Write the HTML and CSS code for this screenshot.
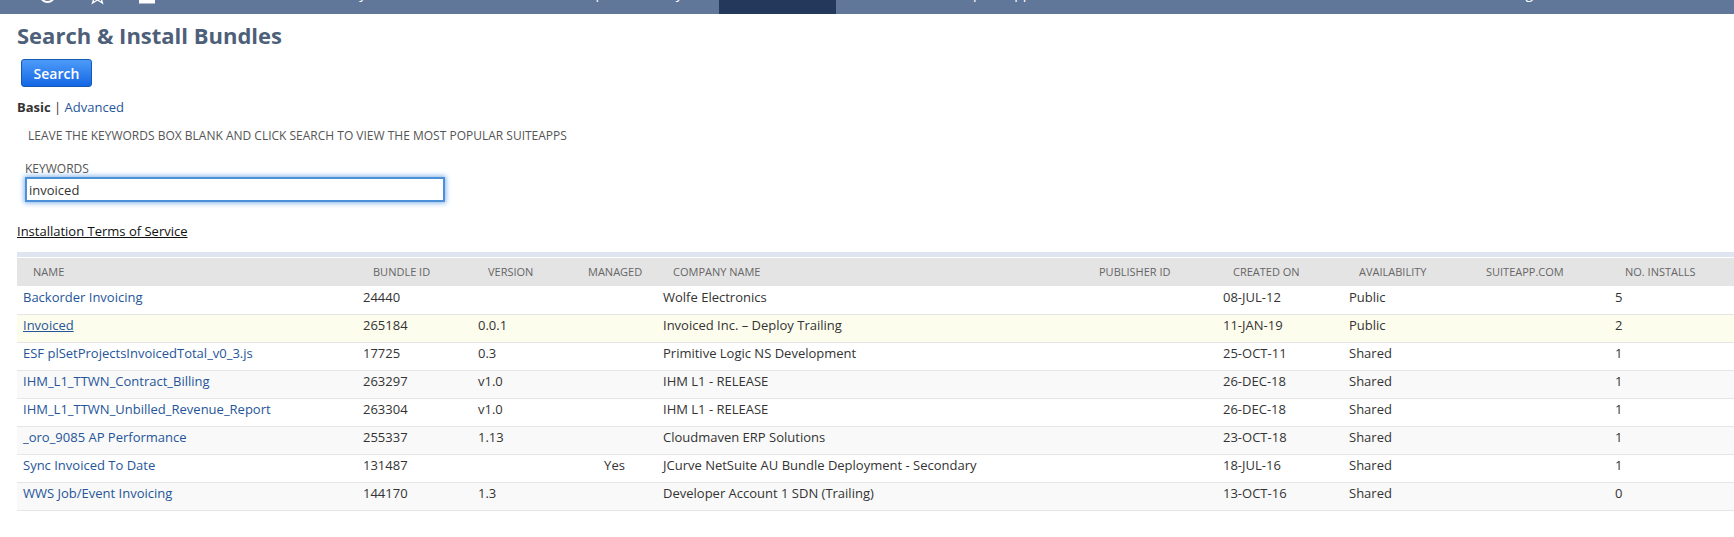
FILE: index.html
```html
<!DOCTYPE html>
<html lang="en">
<head>
    <meta charset="UTF-8">
    <meta name="viewport" content="width=device-width, initial-scale=1.0">
    <title>Search &amp; Install Bundles</title>
    <link rel="stylesheet" href="styles.css">
</head>
<body>
    <nav class="topbar">
        <svg class="nav-icons" width="170" height="14" viewBox="0 0 170 14">
            <circle cx="47.5" cy="-5" r="7" fill="none" stroke="#fff" stroke-width="2"/>
            <path d="M94 -2 L92.5 3 L97.5 0 L102.5 3 L101 -2" fill="none" stroke="#fff" stroke-width="1.3"/>
            <path d="M139 -4 H155 V3.5 H139 Z" fill="#fff"/>
        </svg>
        <a class="nav-item" href="#">Activities</a>
        <a class="nav-item" href="#">Customers</a>
        <a class="nav-item" href="#">Payroll</a>
        <a class="nav-item" href="#">Financial</a>
        <a class="nav-item" href="#">Orders</a>
        <a class="nav-item" href="#">Reports</a>
        <a class="nav-item" href="#">Analytics</a>
        <a class="nav-item active" href="#">Customization</a>
        <a class="nav-item" href="#">Documents</a>
        <a class="nav-item" href="#">Setup</a>
        <a class="nav-item" href="#">Support</a>
        <a class="nav-item" href="#">Commerce</a>
        <a class="nav-item" href="#">Resources</a>
        <a class="nav-item" href="#">Partners</a>
        <a class="nav-item" href="#">Services</a>
        <a class="nav-item" href="#">Marketing</a>
    </nav>

    <section class="page">
        <h1>Search &amp; Install Bundles</h1>
        <button class="search-btn" type="button">Search</button>

        <p class="mode"><b>Basic</b> | <a href="#">Advanced</a></p>
        <p class="hint">LEAVE THE KEYWORDS BOX BLANK AND CLICK SEARCH TO VIEW THE MOST POPULAR SUITEAPPS</p>

        <label class="field-label" for="keywords">KEYWORDS</label>
        <input class="field" id="keywords" type="text" value="invoiced">

        <a class="terms" href="#">Installation Terms of Service</a>

        <div class="table-band"></div>
        <table class="bundles">
            <colgroup>
                <col class="c-name"><col class="c-id"><col class="c-version"><col class="c-managed">
                <col class="c-company"><col class="c-publisher"><col class="c-created">
                <col class="c-avail"><col class="c-suite"><col class="c-installs">
            </colgroup>
            <thead>
                <tr>
                    <th>NAME</th><th>BUNDLE ID</th><th>VERSION</th><th>MANAGED</th><th>COMPANY NAME</th>
                    <th>PUBLISHER ID</th><th>CREATED ON</th><th>AVAILABILITY</th><th>SUITEAPP.COM</th><th>NO. INSTALLS</th>
                </tr>
            </thead>
            <tbody>
                <tr>
                    <td><a href="#">Backorder Invoicing</a></td><td>24440</td><td></td><td></td><td>Wolfe Electronics</td>
                    <td></td><td>08-JUL-12</td><td>Public</td><td></td><td>5</td>
                </tr>
                <tr class="hover">
                    <td><a class="under" href="#">Invoiced</a></td><td>265184</td><td>0.0.1</td><td></td><td>Invoiced Inc. – Deploy Trailing</td>
                    <td></td><td>11-JAN-19</td><td>Public</td><td></td><td>2</td>
                </tr>
                <tr>
                    <td><a href="#">ESF plSetProjectsInvoicedTotal_v0_3.js</a></td><td>17725</td><td>0.3</td><td></td><td>Primitive Logic NS Development</td>
                    <td></td><td>25-OCT-11</td><td>Shared</td><td></td><td>1</td>
                </tr>
                <tr class="alt">
                    <td><a href="#">IHM_L1_TTWN_Contract_Billing</a></td><td>263297</td><td>v1.0</td><td></td><td>IHM L1 - RELEASE</td>
                    <td></td><td>26-DEC-18</td><td>Shared</td><td></td><td>1</td>
                </tr>
                <tr>
                    <td><a href="#">IHM_L1_TTWN_Unbilled_Revenue_Report</a></td><td>263304</td><td>v1.0</td><td></td><td>IHM L1 - RELEASE</td>
                    <td></td><td>26-DEC-18</td><td>Shared</td><td></td><td>1</td>
                </tr>
                <tr class="alt">
                    <td><a href="#">_oro_9085 AP Performance</a></td><td>255337</td><td>1.13</td><td></td><td>Cloudmaven ERP Solutions</td>
                    <td></td><td>23-OCT-18</td><td>Shared</td><td></td><td>1</td>
                </tr>
                <tr>
                    <td><a href="#">Sync Invoiced To Date</a></td><td>131487</td><td></td><td>Yes</td><td>JCurve NetSuite AU Bundle Deployment - Secondary</td>
                    <td></td><td>18-JUL-16</td><td>Shared</td><td></td><td>1</td>
                </tr>
                <tr class="alt">
                    <td><a href="#">WWS Job/Event Invoicing</a></td><td>144170</td><td>1.3</td><td></td><td>Developer Account 1 SDN (Trailing)</td>
                    <td></td><td>13-OCT-16</td><td>Shared</td><td></td><td>0</td>
                </tr>
            </tbody>
        </table>
    </section>
</body>
</html>
```

FILE: styles.css
```css
body {
    margin: 0;
    overflow: hidden;
    background-color: #fff;
    font-family: 'Open Sans', sans-serif;
    font-size: 13px;
    color: #333;
}

a {
    color: #255599;
    text-decoration: none;
}

/* the page is scrolled, only the bottom edge of the menu shows */
.topbar {
    display: grid;
    grid-template-columns: 170px 84px 78px 57px 81px 98px 68px 83px 117px 97px 54px 88px 95px 95px 100px 91px 1fr;
    height: 14px;
    overflow: hidden;
    background-color: #607799;
}

.nav-item {
    height: 35px;
    margin-top: -21px;
    padding-left: 11px;
    font-size: 14px;
    line-height: 28px;
    color: #fff;
    white-space: nowrap;
}

.nav-item.active {
    background-color: #24385b;
}

.page {
    display: flex;
    flex-direction: column;
    align-items: flex-start;
    padding-left: 17px;
}

h1 {
    margin: 7px 0 0;
    font-size: 22px;
    line-height: 28px;
    color: #4d5f79;
}

.search-btn {
    width: 71px;
    height: 28px;
    margin: 10px 0 0 4px;
    padding: 0;
    border: 1px solid #125ab2;
    border-radius: 3px;
    background: linear-gradient(#4d9bf8, #1467e5);
    color: #fff;
    font-family: inherit;
    font-size: 14px;
    font-weight: 600;
}

.mode {
    margin: 10px 0 0;
    line-height: 20px;
}

.hint {
    margin: 9px 0 0 11px;
    font-size: 12px;
    line-height: 20px;
    color: #555;
}

.field-label {
    margin: 13px 0 -1px 8px;
    font-size: 12px;
    line-height: 19px;
    color: #555;
}

.field {
    box-sizing: border-box;
    width: 420px;
    height: 25px;
    margin: 0 0 0 8px;
    padding: 0 2px;
    border: 2px solid #4d90d8;
    box-shadow: 0 0 5px 1px #7fb2ea;
    outline: none;
    font-family: inherit;
    font-size: 13px;
    color: #333;
}

.terms {
    margin-top: 19px;
    line-height: 20px;
    color: #111;
    text-decoration: underline;
}

.table-band {
    width: 100%;
    height: 5px;
    margin-top: 11px;
    margin-bottom: 1px;
    background-color: #dfe5f0;
}

.bundles {
    width: 1717px;
    table-layout: fixed;
    border-collapse: collapse;
}

.c-name { width: 340px; }
.c-id { width: 115px; }
.c-version { width: 100px; }
.c-managed { width: 85px; }
.c-company { width: 426px; }
.c-publisher { width: 134px; }
.c-created { width: 126px; }
.c-avail { width: 127px; }
.c-suite { width: 139px; }

.bundles th {
    box-sizing: border-box;
    height: 28px;
    padding: 0 0 2px 16px;
    background-color: #e4e4e4;
    font-size: 11px;
    font-weight: 400;
    text-align: left;
    color: #666;
}

.bundles td {
    box-sizing: border-box;
    height: 28px;
    padding: 0 0 6px 6px;
    border-bottom: 1px solid #e6e6e6;
    white-space: nowrap;
}

/* the Managed column is centred */
.bundles td:nth-child(4) {
    padding-left: 0;
    text-align: center;
}

.bundles .alt td {
    background-color: #f9f9f9;
}

.bundles .hover td {
    background-color: #fdfdee;
}

.under {
    text-decoration: underline;
}
```
